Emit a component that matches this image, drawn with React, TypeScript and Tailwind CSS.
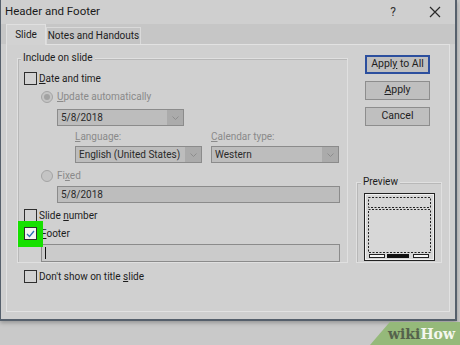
import type React from "react";

const font = { fontFamily: 'Roboto, "Noto Sans", sans-serif' };

const Check: React.FC<{ checked?: boolean }> = ({ checked }) => (
  <span
    className={`flex h-[13px] w-[13px] shrink-0 items-center justify-center border border-[#2e2e2e] ${
      checked ? "bg-[#f4f4f4]" : "bg-[#d2d2d2]"
    }`}
  >
    {checked && (
      <svg width="9" height="8" viewBox="0 0 9 8">
        <path d="M1 4 L3.5 6.5 L8 1" fill="none" stroke="#2d6fb5" strokeWidth="1.3" />
      </svg>
    )}
  </span>
);

const Radio: React.FC<{ on?: boolean }> = ({ on }) => (
  <span className="flex h-[12px] w-[12px] shrink-0 items-center justify-center rounded-full border border-[#a4a4a4] bg-[#c4c4c4]">
    {on && <span className="h-[6px] w-[6px] rounded-full bg-[#a2a2a2]" />}
  </span>
);

const Combo: React.FC<{ text: string; w: string }> = ({ text, w }) => (
  <div
    className={`flex h-[17px] ${w} items-stretch border border-[#8b8b8b] bg-[#bdbdbd] text-[10px] leading-none text-[#2a2a2a]`}
  >
    <span className="flex flex-1 items-center whitespace-nowrap pl-[3px]">{text}</span>
    <span className="flex w-[16px] items-center justify-center bg-[#ababab]">
      <svg width="7" height="4" viewBox="0 0 7 4">
        <path d="M0.5 0.5 L3.5 3.5 L6.5 0.5" fill="none" stroke="#8d8d8d" strokeWidth="1" />
      </svg>
    </span>
  </div>
);

const Btn: React.FC<{ children: React.ReactNode; focus?: boolean }> = ({ children, focus }) => (
  <div
    className={`flex h-[19px] w-[65px] items-center justify-center bg-[#bfbfbf] text-[10.5px] leading-none text-[#1e1e1e] ${
      focus ? "border-2 border-[#2c4f9e]" : "border border-[#8d8d8d]"
    }`}
  >
    {children}
  </div>
);

const Preview: React.FC = () => (
  <svg width="71" height="68" viewBox="0 0 71 68">
    <rect x="0.5" y="0.5" width="70" height="67" fill="#d7d7d7" stroke="#222" />
    <rect x="1.5" y="1.5" width="68" height="65" fill="none" stroke="#f0f0f0" />
    <rect x="4.5" y="4.5" width="62" height="10" fill="none" stroke="#222" strokeDasharray="2 1.5" />
    <rect x="4.5" y="16.5" width="62" height="43" fill="none" stroke="#222" strokeDasharray="2 1.5" />
    <rect x="5.5" y="61.5" width="15" height="3" fill="#f4f4f4" stroke="#222" />
    <rect x="23" y="61" width="22" height="4" fill="#111" />
    <rect x="49.5" y="61.5" width="15" height="3" fill="#f4f4f4" stroke="#222" />
  </svg>
);

export default function App() {
  return (
    <div
      className="relative h-[345px] w-[460px] overflow-hidden bg-[#c9c9c9] text-[#1c1c1c]"
      style={font}
    >
      {/* dialog window */}
      <div className="flex h-[321px] w-[457px] flex-col border-b-2 border-l border-r-2 border-[#56606c] bg-[#cfcfcf] shadow-[0_2px_4px_rgba(0,0,0,0.25)]">
        {/* title bar */}
        <div className="flex h-[27px] items-center pl-[4px] pr-[14px]">
          <span className="text-[11.5px] leading-none text-[#1a1a1a]">Header and Footer</span>
          <div className="flex-1" />
          <span className="mr-[33px] text-[12px] leading-none text-[#333]">?</span>
          <svg width="12" height="12" viewBox="0 0 12 12">
            <path d="M1 1 L11 11 M11 1 L1 11" stroke="#2a2a2a" strokeWidth="1.2" />
          </svg>
        </div>

        {/* tabs */}
        <div className="flex h-[21px] items-end bg-[#c6c6c6] pl-[5px]">
          <div className="z-10 -mb-px flex h-[21px] w-[40px] items-center justify-center border border-b-0 border-[#e0e0e0] bg-[#d2d2d2] text-[10px] leading-none">
            Slide
          </div>
          <div className="flex h-[17px] w-[95px] items-center justify-center whitespace-nowrap border border-b-0 border-[#dadada] bg-[#c4c4c4] text-[10px] leading-none">
            Notes and Handouts
          </div>
        </div>

        {/* tab panel */}
        <div className="mx-[5px] mb-[7px] flex flex-1 border border-[#e2e2e2] bg-[#d0d0d0] pl-[10px] pt-[13px]">
          {/* include on slide group */}
          <div className="relative mb-[48px] flex w-[331px] flex-col border border-[#e0e0e0] pl-[6px] pt-[13px] shadow-[inset_1px_1px_0_#b8b8b8]">
            <span className="absolute -top-[6px] left-[3px] bg-[#d0d0d0] px-[2px] text-[10px] leading-none">
              Include on slide
            </span>
            <div className="flex items-center gap-[2px] text-[10px] leading-none">
              <Check />
              <span>
                <u>D</u>ate and time
              </span>
            </div>
            <div className="mt-[6px] flex items-center gap-[4px] pl-[17px] text-[10px] leading-none text-[#8a8a8a]">
              <Radio on />
              <span>
                <u>U</u>pdate automatically
              </span>
            </div>
            <div className="mt-[6px] pl-[33px]">
              <Combo text="5/8/2018" w="w-[127px]" />
            </div>
            <div className="mt-[6px] flex gap-[9px] pl-[51px] text-[10px] leading-none text-[#8a8a8a]">
              <div className="flex flex-col gap-[4px]">
                <span>
                  <u>L</u>anguage:
                </span>
                <Combo text="English (United States)" w="w-[127px]" />
              </div>
              <div className="flex flex-col gap-[4px]">
                <span>
                  <u>C</u>alendar type:
                </span>
                <Combo text="Western" w="w-[128px]" />
              </div>
            </div>
            <div className="mt-[7px] flex items-center gap-[4px] pl-[17px] text-[10px] leading-none text-[#8a8a8a]">
              <Radio />
              <span>
                Fi<u>x</u>ed
              </span>
            </div>
            <div className="ml-[33px] mt-[4px] flex h-[17px] w-[283px] items-center border border-[#8b8b8b] bg-[#bdbdbd] pl-[3px] text-[10px] leading-none text-[#2a2a2a]">
              5/8/2018
            </div>
            <div className="mt-[6px] flex items-center gap-[2px] text-[10px] leading-none">
              <Check />
              <span>
                Slide <u>n</u>umber
              </span>
            </div>
            <div className="relative mt-[5px] flex items-center gap-[4px] text-[10px] leading-none">
              <span className="absolute -left-[6px] -top-[6px] h-[26px] w-[25px] bg-[#16e000]" />
              <span className="relative">
                <Check checked />
              </span>
              <span>
                <u>F</u>ooter
              </span>
            </div>
            <div className="ml-[17px] mt-[4px] flex h-[18px] w-[299px] items-center border border-[#8b8b8b] bg-[#cbcbcb] pl-[3px]">
              <span className="h-[12px] w-px bg-[#111]" />
            </div>
          </div>

          {/* right column */}
          <div className="ml-[8px] flex flex-col">
            <div className="ml-[9px] mt-[-3px] flex flex-col gap-[7px]">
              <Btn focus>
                <span>
                  Appl<u>y</u> to All
                </span>
              </Btn>
              <Btn>
                <span>
                  <u>A</u>pply
                </span>
              </Btn>
              <Btn>Cancel</Btn>
            </div>
            <div className="relative mt-[56px] flex h-[81px] w-[86px] justify-center border border-[#e0e0e0] pt-[10px] shadow-[inset_1px_1px_0_#b8b8b8]">
              <span className="absolute -top-[6px] left-[4px] bg-[#d0d0d0] px-[2px] text-[10px] leading-none">
                Preview
              </span>
              <Preview />
            </div>
          </div>
        </div>
      </div>

      {/* don't show on title slide, below the group inside the panel */}
      <div className="absolute left-[24px] top-[270px] flex items-center gap-[2px] text-[10px] leading-none">
        <Check />
        <span>
          Don't show on title <u>s</u>lide
        </span>
      </div>

      {/* wikiHow badge */}
      <div className="absolute bottom-0 right-0 flex h-[23px] w-[90px] items-center justify-end bg-[#95b97a] pr-[5px] [clip-path:polygon(22%_0,100%_0,100%_100%,0_100%)]">
        <span className="text-[14px] font-bold leading-none" style={{ fontFamily: '"DejaVu Serif", serif' }}>
          <span className="text-[#55624c]">wiki</span>
          <span className="text-[#f4f7ef]">How</span>
        </span>
      </div>
    </div>
  );
}
